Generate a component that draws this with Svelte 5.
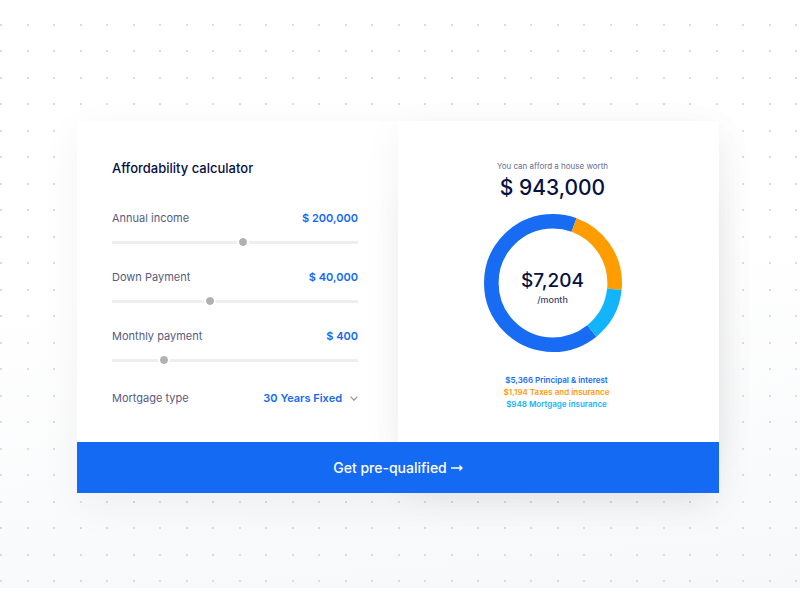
<script>
  let sliders = $state([
    { id: 'income', label: 'Annual income', value: 200000, position: 535 },
    { id: 'down', label: 'Down Payment', value: 40000, position: 394 },
    { id: 'monthly', label: 'Monthly payment', value: 400, position: 198 }
  ]);
  let mortgage = $state('30 Years Fixed');

  // start and sweep are degrees, clockwise from twelve o'clock
  const parts = [
    { name: 'principal', amount: 5366, label: 'Principal & interest', start: 141, sweep: 239 },
    { name: 'taxes', amount: 1194, label: 'Taxes and insurance', start: 20, sweep: 76 },
    { name: 'insurance', amount: 948, label: 'Mortgage insurance', start: 96, sweep: 45 }
  ];

  const money = (n) => n.toLocaleString('en-US');
</script>

<main class="stage">
  <form class="card" onsubmit={(e) => e.preventDefault()}>
    <div class="panels">
      <section class="inputs">
        <h1>Affordability calculator</h1>
        {#each sliders as s (s.id)}
          <div class="field">
            <div class="row">
              <label for={s.id}>{s.label}</label>
              <output class="value" for={s.id}>$ {money(s.value)}</output>
            </div>
            <input id={s.id} type="range" min="0" max="1000" bind:value={s.position} />
          </div>
        {/each}
        <div class="row type">
          <label for="mortgage">Mortgage type</label>
          <div class="picker">
            <select id="mortgage" class="value" bind:value={mortgage}>
              <option>30 Years Fixed</option>
              <option>15 Years Fixed</option>
            </select>
            <svg class="chevron" viewBox="0 0 8 5" aria-hidden="true">
              <path d="M0.6 0.6 L4 4.2 L7.4 0.6" />
            </svg>
          </div>
        </div>
      </section>

      <section class="result">
        <p class="hint">You can afford a house worth</p>
        <p class="worth">$ 943,000</p>
        <div class="donut">
          <svg viewBox="0 0 138 138" aria-hidden="true">
            <g transform="rotate(-90 69 69)">
              {#each parts as p (p.name)}
                <circle
                  class={p.name}
                  cx="69"
                  cy="69"
                  r="61.7"
                  pathLength="360"
                  stroke-dasharray="{p.sweep} {360 - p.sweep}"
                  stroke-dashoffset={-p.start}
                />
              {/each}
            </g>
          </svg>
          <div class="total">
            <strong>$7,204</strong>
            <span>/month</span>
          </div>
        </div>
        <ul class="legend">
          {#each parts as p (p.name)}
            <li class={p.name}>${money(p.amount)} {p.label}</li>
          {/each}
        </ul>
      </section>
    </div>
    <button type="submit">
      Get pre-qualified
      <svg class="arrow" viewBox="0 0 12 10" aria-hidden="true">
        <path d="M0 5 H11 M8.4 2.4 L11 5 L8.4 7.6" />
      </svg>
    </button>
  </form>
</main>

<style>
  :global(body) {
    margin: 0;
    background: #fff;
  }
  .stage {
    --dot: radial-gradient(circle at 1px 1px, #dcdcdf 1px, transparent 1px);
    box-sizing: border-box;
    padding: 121px 81px 95px 77px;
    font-family: Inter, 'Liberation Sans', sans-serif;
    color: #07103f;
    background:
      var(--dot) 0 24px / 53px 53px,
      var(--dot) 27px 24px / 53px 53px,
      var(--dot) 0 50px / 53px 53px,
      var(--dot) 27px 50px / 53px 53px,
      linear-gradient(175deg, #fff 45%, #f7f8fa);
  }
  .card {
    background: #fff;
    box-shadow: 0 12px 40px rgba(0, 0, 0, 0.05);
  }
  .panels {
    display: grid;
    grid-template-columns: 1fr 1fr;
  }
  .inputs {
    padding: 37px 40px 0 35px;
  }
  .result {
    display: flex;
    flex-direction: column;
    align-items: center;
    padding: 38px 12px 32px 0;
    background: #fff;
    box-shadow:
      0 12px 40px rgba(0, 0, 0, 0.05),
      0 64px 36px -10px rgba(0, 0, 0, 0.07);
  }
  h1 {
    margin: 0 0 30px;
    font-size: 13px;
    font-weight: 500;
    line-height: 20px;
  }
  .field {
    display: flex;
    flex-direction: column;
    gap: 8px;
    margin-bottom: 19px;
  }
  .row {
    display: flex;
    justify-content: space-between;
    align-items: center;
    font-size: 11px;
    line-height: 20px;
  }
  label {
    color: #575c80;
  }
  .value {
    font-family: inherit;
    font-size: 11px;
    font-weight: 600;
    line-height: 20px;
    color: #146af2;
  }
  input {
    appearance: none;
    width: 100%;
    height: 12px;
    margin: 0;
    background: linear-gradient(#eee, #eee) center / 100% 3px no-repeat;
  }
  input::-webkit-slider-thumb {
    appearance: none;
    box-sizing: border-box;
    width: 12px;
    height: 12px;
    border: 2px solid #fff;
    border-radius: 50%;
    background: #b1b1b1;
    background-clip: padding-box;
  }
  .type {
    padding-top: 3px;
  }
  .picker {
    display: flex;
    align-items: center;
    gap: 8px;
  }
  select {
    appearance: none;
    padding: 0;
    border: 0;
    background: none;
    text-align-last: right;
  }
  .chevron {
    width: 8px;
    height: 5px;
    fill: none;
    stroke: #999;
    stroke-width: 1.3px;
  }
  p {
    margin: 0;
  }
  .hint {
    font-size: 8px;
    line-height: 14px;
    color: #696d8c;
  }
  .worth {
    margin-bottom: 11px;
    font-size: 21px;
    font-weight: 500;
    line-height: 30px;
  }
  .donut {
    display: grid;
    place-items: center;
    margin-bottom: 22px;
  }
  .donut > * {
    grid-area: 1 / 1;
  }
  .donut svg {
    width: 138px;
    height: 138px;
    fill: none;
    stroke: currentColor;
    stroke-width: 14.6px;
  }
  .principal {
    color: #176cf3;
  }
  .taxes {
    color: #ff9c00;
  }
  .insurance {
    color: #12b4fb;
  }
  .total {
    display: flex;
    flex-direction: column;
    align-items: center;
    padding-top: 10px;
  }
  strong {
    font-size: 19px;
    font-weight: 500;
    line-height: 24px;
  }
  .total span {
    font-size: 9px;
    font-weight: 500;
    line-height: 14px;
    color: #3d4269;
  }
  .legend {
    margin: 0;
    padding: 0 0 0 8px;
    list-style: none;
    font-size: 8px;
    font-weight: 600;
    line-height: 12px;
    text-align: center;
  }
  button {
    display: flex;
    justify-content: center;
    align-items: center;
    gap: 4px;
    position: relative;
    width: 100%;
    height: 51px;
    padding: 0;
    border: 0;
    background: #146af2;
    color: #fff;
    font-family: inherit;
    font-size: 14px;
    font-weight: 500;
  }
  .arrow {
    width: 12px;
    height: 10px;
    fill: none;
    stroke: currentColor;
    stroke-width: 1.4px;
  }
</style>
